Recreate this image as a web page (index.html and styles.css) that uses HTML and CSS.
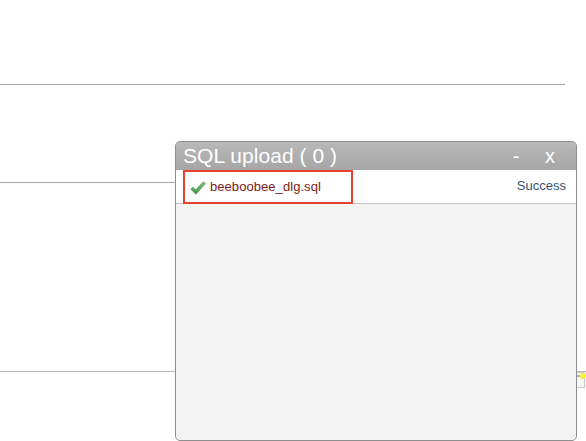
FILE: index.html
```html
<html>
  <head>
    <link rel="stylesheet" href="styles.css">
  </head>
  <body>
    <div class="rows">
      <div class="row first"></div>
      <div class="row second"></div>
      <div class="row third"></div>
    </div>

    <div class="stub"><span class="stub-bar"></span><span class="stub-dot"></span></div>

    <div class="upload">
      <div class="upload-head">
        <span class="upload-title">SQL upload ( 0 )</span>
        <span class="upload-btn min">-</span>
        <span class="upload-btn close">x</span>
      </div>
      <div class="upload-file">
        <div class="file-name">
          <svg class="tick" width="16" height="14" viewBox="0 0 16 14">
            <defs>
              <linearGradient id="tickfill" x1="0" y1="0" x2="0" y2="1">
                <stop offset="0" stop-color="#8cc98a"/>
                <stop offset="1" stop-color="#3f9440"/>
              </linearGradient>
            </defs>
            <path d="M0.8 8.2 L3 6.2 L5.8 8.8 L13.4 0.8 L15.4 2.6 L5.9 13.2 Z" fill="url(#tickfill)" stroke="#4c8f4c" stroke-width="0.7"/>
          </svg>
          <span>beeboobee_dlg.sql</span>
        </div>
        <span class="file-status">Success</span>
      </div>
      <div class="upload-body"></div>
    </div>
  </body>
</html>
```

FILE: styles.css
```css
html, body {
  margin: 0;
  padding: 0;
  height: 441px;
  overflow: hidden;
  background-color: #fff;
  font-family: "Liberation Sans", Arial, sans-serif;
}

.rows {
  width: 565px;
}

.row {
  box-sizing: border-box;
  border-bottom: 1px solid #a6a6a6;
}

.first { height: 85px; }
.second { height: 98px; }
.third { height: 189px; width: 586px; border-bottom-color: #bdbdbd; }

/* the thing peeking out from behind the dialog */
.stub {
  position: absolute;
  left: 570px;
  top: 372px;
  width: 15px;
  height: 16px;
  box-sizing: border-box;
  border: 1px solid #c8c8c8;
  background-color: #f6f6f2;
}

.stub-bar {
  position: absolute;
  left: 6px;
  top: 2px;
  width: 6px;
  height: 2px;
  background-color: #a9b4cc;
}

.stub-dot {
  position: absolute;
  left: 9px;
  top: 0;
  width: 6px;
  height: 6px;
  border-radius: 50%;
  background-color: #f7f03a;
}

.upload {
  position: absolute;
  left: 175px;
  top: 141px;
  width: 402px;
  height: 300px;
  box-sizing: border-box;
  display: flex;
  flex-direction: column;
  border: 1px solid #8e8e8e;
  border-radius: 5px;
  background-color: #f3f3f3;
  overflow: hidden;
}

.upload-head {
  display: flex;
  align-items: center;
  flex: none;
  height: 28px;
  padding-left: 7px;
  background: linear-gradient(#b8b8b8, #a6a6a6);
  color: #fff;
}

.upload-title {
  flex: 1;
  font-size: 21px;
  letter-spacing: 0.05px;
}

.upload-btn {
  font-size: 20px;
  text-align: center;
}

.min { width: 14px; margin-right: 20px; }
.close { width: 14px; margin-right: 19px; }

.upload-file {
  display: flex;
  align-items: center;
  justify-content: space-between;
  flex: none;
  height: 33px;
  padding-right: 10px;
  background-color: #fff;
  border-bottom: 1px solid #c4c4c4;
}

.file-name {
  display: flex;
  align-items: center;
  box-sizing: border-box;
  width: 170px;
  height: 34px;
  margin-left: 7px;
  padding-left: 5px;
  border: 2px solid #e8402c;
  font-size: 13px;
  letter-spacing: 0.06px;
  color: #7d1a1a;
}

.tick {
  margin-right: 4px;
  margin-top: 2px;
}

.file-status {
  font-size: 13px;
  color: #33566e;
  margin-top: -2px;
}

.upload-body {
  flex: 1;
}
```
